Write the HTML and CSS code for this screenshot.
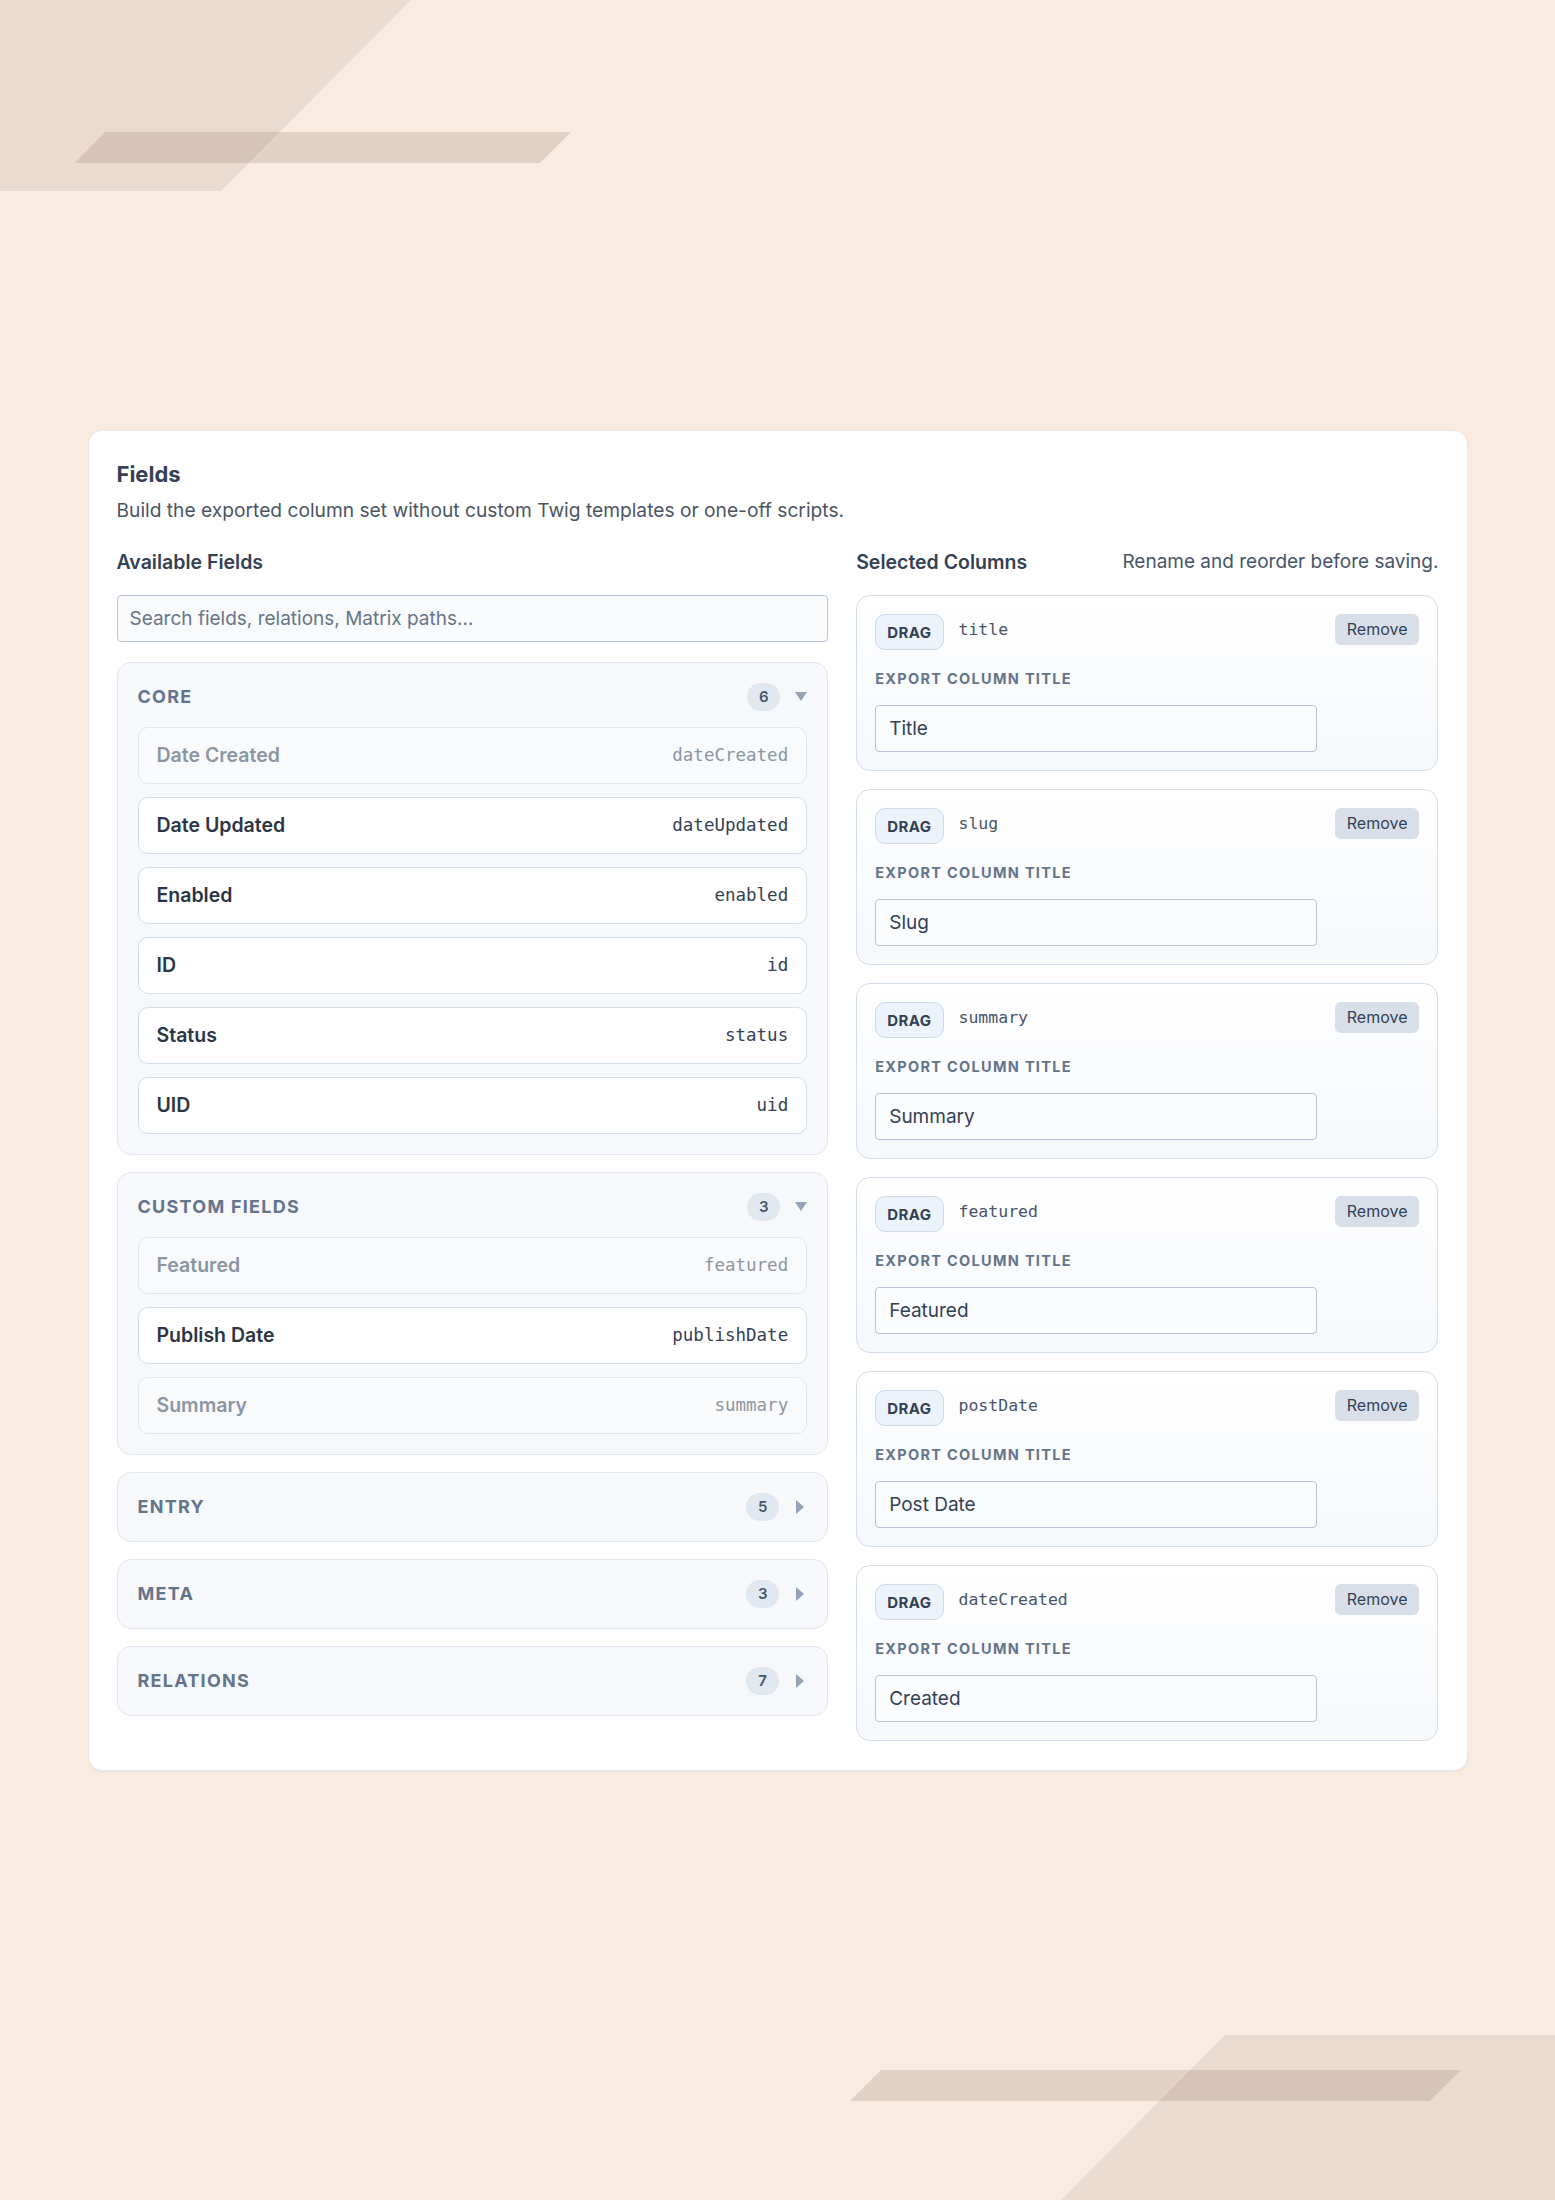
FILE: index.html
```html
<!DOCTYPE html>
<html lang="en">
<head>
    <meta charset="UTF-8">
    <meta name="viewport" content="width=device-width, initial-scale=1.0">
    <title>Export Fields</title>
    <link rel="stylesheet" href="styles.css">
</head>
<body>

<div class="deco deco-corner-top"></div>
<div class="deco deco-band-top"></div>
<div class="deco deco-corner-bottom"></div>
<div class="deco deco-band-bottom"></div>

<section class="panel">
    <h2 class="panel-title">Fields</h2>
    <p class="panel-intro">Build the exported column set without custom Twig templates or one-off scripts.</p>

    <div class="columns">
        <!-- Left: fields that can be added -->
        <div class="available">
            <div class="col-head">
                <h3>Available Fields</h3>
            </div>
            <input class="search" type="text" placeholder="Search fields, relations, Matrix paths...">

            <div class="group is-open">
                <div class="group-head">
                    <span class="group-name">Core</span>
                    <span class="count">6</span>
                    <span class="caret"></span>
                </div>
                <ul class="field-list">
                    <li class="field is-added"><span class="field-label">Date Created</span><code>dateCreated</code></li>
                    <li class="field"><span class="field-label">Date Updated</span><code>dateUpdated</code></li>
                    <li class="field"><span class="field-label">Enabled</span><code>enabled</code></li>
                    <li class="field"><span class="field-label">ID</span><code>id</code></li>
                    <li class="field"><span class="field-label">Status</span><code>status</code></li>
                    <li class="field"><span class="field-label">UID</span><code>uid</code></li>
                </ul>
            </div>

            <div class="group is-open">
                <div class="group-head">
                    <span class="group-name">Custom Fields</span>
                    <span class="count">3</span>
                    <span class="caret"></span>
                </div>
                <ul class="field-list">
                    <li class="field is-added"><span class="field-label">Featured</span><code>featured</code></li>
                    <li class="field"><span class="field-label">Publish Date</span><code>publishDate</code></li>
                    <li class="field is-added"><span class="field-label">Summary</span><code>summary</code></li>
                </ul>
            </div>

            <div class="group">
                <div class="group-head">
                    <span class="group-name">Entry</span>
                    <span class="count">5</span>
                    <span class="caret"></span>
                </div>
            </div>

            <div class="group">
                <div class="group-head">
                    <span class="group-name">Meta</span>
                    <span class="count">3</span>
                    <span class="caret"></span>
                </div>
            </div>

            <div class="group">
                <div class="group-head">
                    <span class="group-name">Relations</span>
                    <span class="count">7</span>
                    <span class="caret"></span>
                </div>
            </div>
        </div>

        <!-- Right: columns that will be exported -->
        <div class="selected">
            <div class="col-head">
                <h3>Selected Columns</h3>
                <span class="col-hint">Rename and reorder before saving.</span>
            </div>

            <div class="col-card">
                <div class="col-card-head">
                    <span class="drag">DRAG</span>
                    <code class="handle">title</code>
                    <button class="remove" type="button">Remove</button>
                </div>
                <label class="col-label">Export column title</label>
                <input class="col-input" type="text" value="Title">
            </div>

            <div class="col-card">
                <div class="col-card-head">
                    <span class="drag">DRAG</span>
                    <code class="handle">slug</code>
                    <button class="remove" type="button">Remove</button>
                </div>
                <label class="col-label">Export column title</label>
                <input class="col-input" type="text" value="Slug">
            </div>

            <div class="col-card">
                <div class="col-card-head">
                    <span class="drag">DRAG</span>
                    <code class="handle">summary</code>
                    <button class="remove" type="button">Remove</button>
                </div>
                <label class="col-label">Export column title</label>
                <input class="col-input" type="text" value="Summary">
            </div>

            <div class="col-card">
                <div class="col-card-head">
                    <span class="drag">DRAG</span>
                    <code class="handle">featured</code>
                    <button class="remove" type="button">Remove</button>
                </div>
                <label class="col-label">Export column title</label>
                <input class="col-input" type="text" value="Featured">
            </div>

            <div class="col-card">
                <div class="col-card-head">
                    <span class="drag">DRAG</span>
                    <code class="handle">postDate</code>
                    <button class="remove" type="button">Remove</button>
                </div>
                <label class="col-label">Export column title</label>
                <input class="col-input" type="text" value="Post Date">
            </div>

            <div class="col-card">
                <div class="col-card-head">
                    <span class="drag">DRAG</span>
                    <code class="handle">dateCreated</code>
                    <button class="remove" type="button">Remove</button>
                </div>
                <label class="col-label">Export column title</label>
                <input class="col-input" type="text" value="Created">
            </div>
        </div>
    </div>
</section>

</body>
</html>
```

FILE: styles.css
```css
body {
    font-family: 'Inter', 'Liberation Sans', sans-serif;
    background-color: #f9ebdf;
    color: #334155;
    margin: 0;
    padding: 0;
    height: 100vh;
    position: relative;
    overflow: hidden;
    display: flex;
    justify-content: center;
    align-items: center;
}

/* background slabs */
.deco {
    position: absolute;
    background-color: rgba(102, 62, 50, 0.09);
}
.deco-corner-top {
    left: 0;
    top: 0;
    width: 411px;
    height: 191px;
    clip-path: polygon(0 0, 100% 0, 221px 100%, 0 100%);
}
.deco-band-top {
    left: 75px;
    top: 132px;
    width: 496px;
    height: 31px;
    background-color: rgba(102, 62, 50, 0.15);
    clip-path: polygon(30px 0, 100% 0, 465px 100%, 0 100%);
}
.deco-corner-bottom {
    left: 1061px;
    top: 2035px;
    width: 494px;
    height: 165px;
    clip-path: polygon(164px 0, 100% 0, 100% 100%, 0 100%);
}
.deco-band-bottom {
    left: 850px;
    top: 2070px;
    width: 611px;
    height: 31px;
    background-color: rgba(102, 62, 50, 0.15);
    clip-path: polygon(31px 0, 100% 0, 580px 100%, 0 100%);
}

.panel {
    position: relative;
    z-index: 1;
    width: 1380px;
    box-sizing: border-box;
    background-color: #ffffff;
    border: 1px solid #e6e9ee;
    border-radius: 14px;
    padding: 29px 28px;
    box-shadow: 0 1px 2px rgba(15, 23, 42, 0.04);
}
.panel-title {
    margin: 0;
    font-size: 22px;
    line-height: 28px;
    font-weight: 700;
    color: #334155;
}
.panel-intro {
    margin: 9px 0 0;
    font-size: 19.2px;
    line-height: 26px;
    color: #4b5563;
}

.columns {
    display: grid;
    grid-template-columns: minmax(0, 11fr) minmax(0, 9fr);
    gap: 28px;
    margin-top: 26px;
    align-items: start;
}
.col-head {
    display: flex;
    justify-content: space-between;
    align-items: center;
    margin-bottom: 20px;
}
.col-head h3 {
    margin: 0;
    font-size: 19.5px;
    line-height: 26px;
    font-weight: 600;
    color: #334155;
}
.col-hint {
    font-size: 19px;
    line-height: 26px;
    color: #475569;
}

/* available fields */
.available {
    display: flex;
    flex-direction: column;
}
.search {
    font-family: inherit;
    font-size: 19px;
    line-height: 25px;
    padding: 10px 12px;
    border: 1px solid #b9c5d4;
    border-radius: 4px;
    background-color: #f8fafc;
    color: #334155;
    margin-bottom: 20px;
}
.search::placeholder {
    color: #687587;
}
.group {
    background-color: #f6f8fb;
    border: 1px solid #e1e7ef;
    border-radius: 14px;
    padding: 20px;
    margin-bottom: 17px;
}
.group:last-child {
    margin-bottom: 0;
}
.group-head {
    display: flex;
    align-items: center;
    height: 28px;
}
.group-name {
    flex: 1;
    font-size: 18px;
    font-weight: 700;
    letter-spacing: 0.07em;
    text-transform: uppercase;
    color: #64748b;
}
.count {
    min-width: 33px;
    height: 28px;
    line-height: 28px;
    border-radius: 14px;
    background-color: #e2e8f0;
    color: #475569;
    font-size: 15px;
    font-weight: 600;
    text-align: center;
    margin-right: 15px;
}
.caret {
    width: 0;
    height: 0;
    border-top: 7px solid transparent;
    border-bottom: 7px solid transparent;
    border-left: 8px solid #94a3b8;
    margin: 0 3px 0 2px;
}
.is-open .caret {
    border-left: 6.5px solid transparent;
    border-right: 6.5px solid transparent;
    border-top: 9px solid #94a3b8;
    border-bottom: 0;
    margin: 0;
}
.field-list {
    list-style: none;
    margin: 16px 0 0;
    padding: 0;
    display: flex;
    flex-direction: column;
    gap: 13px;
}
.field {
    display: flex;
    justify-content: space-between;
    align-items: center;
    padding: 15px 18px;
    line-height: 25px;
    background-color: #ffffff;
    border: 1px solid #d3deeb;
    border-radius: 10px;
}
.field-label {
    font-size: 19.5px;
    font-weight: 600;
    color: #2b3645;
}
.field code {
    font-family: 'DejaVu Sans Mono', 'Liberation Mono', monospace;
    font-size: 17.5px;
    color: #334155;
}
.field.is-added {
    background-color: #f9fafc;
    border-color: #e1e7ef;
}
.field.is-added .field-label,
.field.is-added code {
    color: #8c96a3;
}

/* selected columns */
.selected {
    display: flex;
    flex-direction: column;
}
.col-card {
    display: flex;
    flex-direction: column;
    align-items: flex-start;
    padding: 18px;
    margin-bottom: 18px;
    border: 1px solid #d3deeb;
    border-radius: 14px;
    background: linear-gradient(180deg, #ffffff 0%, #f5f8fc 100%);
}
.col-card:last-child {
    margin-bottom: 0;
}
.col-card-head {
    display: flex;
    align-items: flex-start;
    gap: 15px;
    width: 100%;
}
.drag {
    padding: 8px 11px 6px;
    line-height: 20px;
    font-size: 15px;
    font-weight: 700;
    letter-spacing: 0.03em;
    color: #334155;
    background-color: #edf3fa;
    border: 1px solid #cddbea;
    border-radius: 10px;
}
.handle {
    font-family: 'DejaVu Sans Mono', 'Liberation Mono', monospace;
    font-size: 16.5px;
    line-height: 31px;
    color: #475569;
}
.remove {
    margin-left: auto;
    font-family: inherit;
    font-size: 16px;
    line-height: 21px;
    padding: 5px 12px;
    border: none;
    border-radius: 6px;
    background-color: #d8dfe8;
    color: #334155;
    cursor: pointer;
}
.col-label {
    margin: 20px 0 18px;
    font-size: 14.5px;
    line-height: 17px;
    font-weight: 700;
    letter-spacing: 0.09em;
    text-transform: uppercase;
    color: #64748b;
}
.col-input {
    width: 442px;
    box-sizing: border-box;
    font-family: inherit;
    font-size: 19px;
    line-height: 25px;
    padding: 10px 13px;
    border: 1px solid #b9c5d4;
    border-radius: 4px;
    background-color: #fbfcfd;
    color: #334155;
}
```
